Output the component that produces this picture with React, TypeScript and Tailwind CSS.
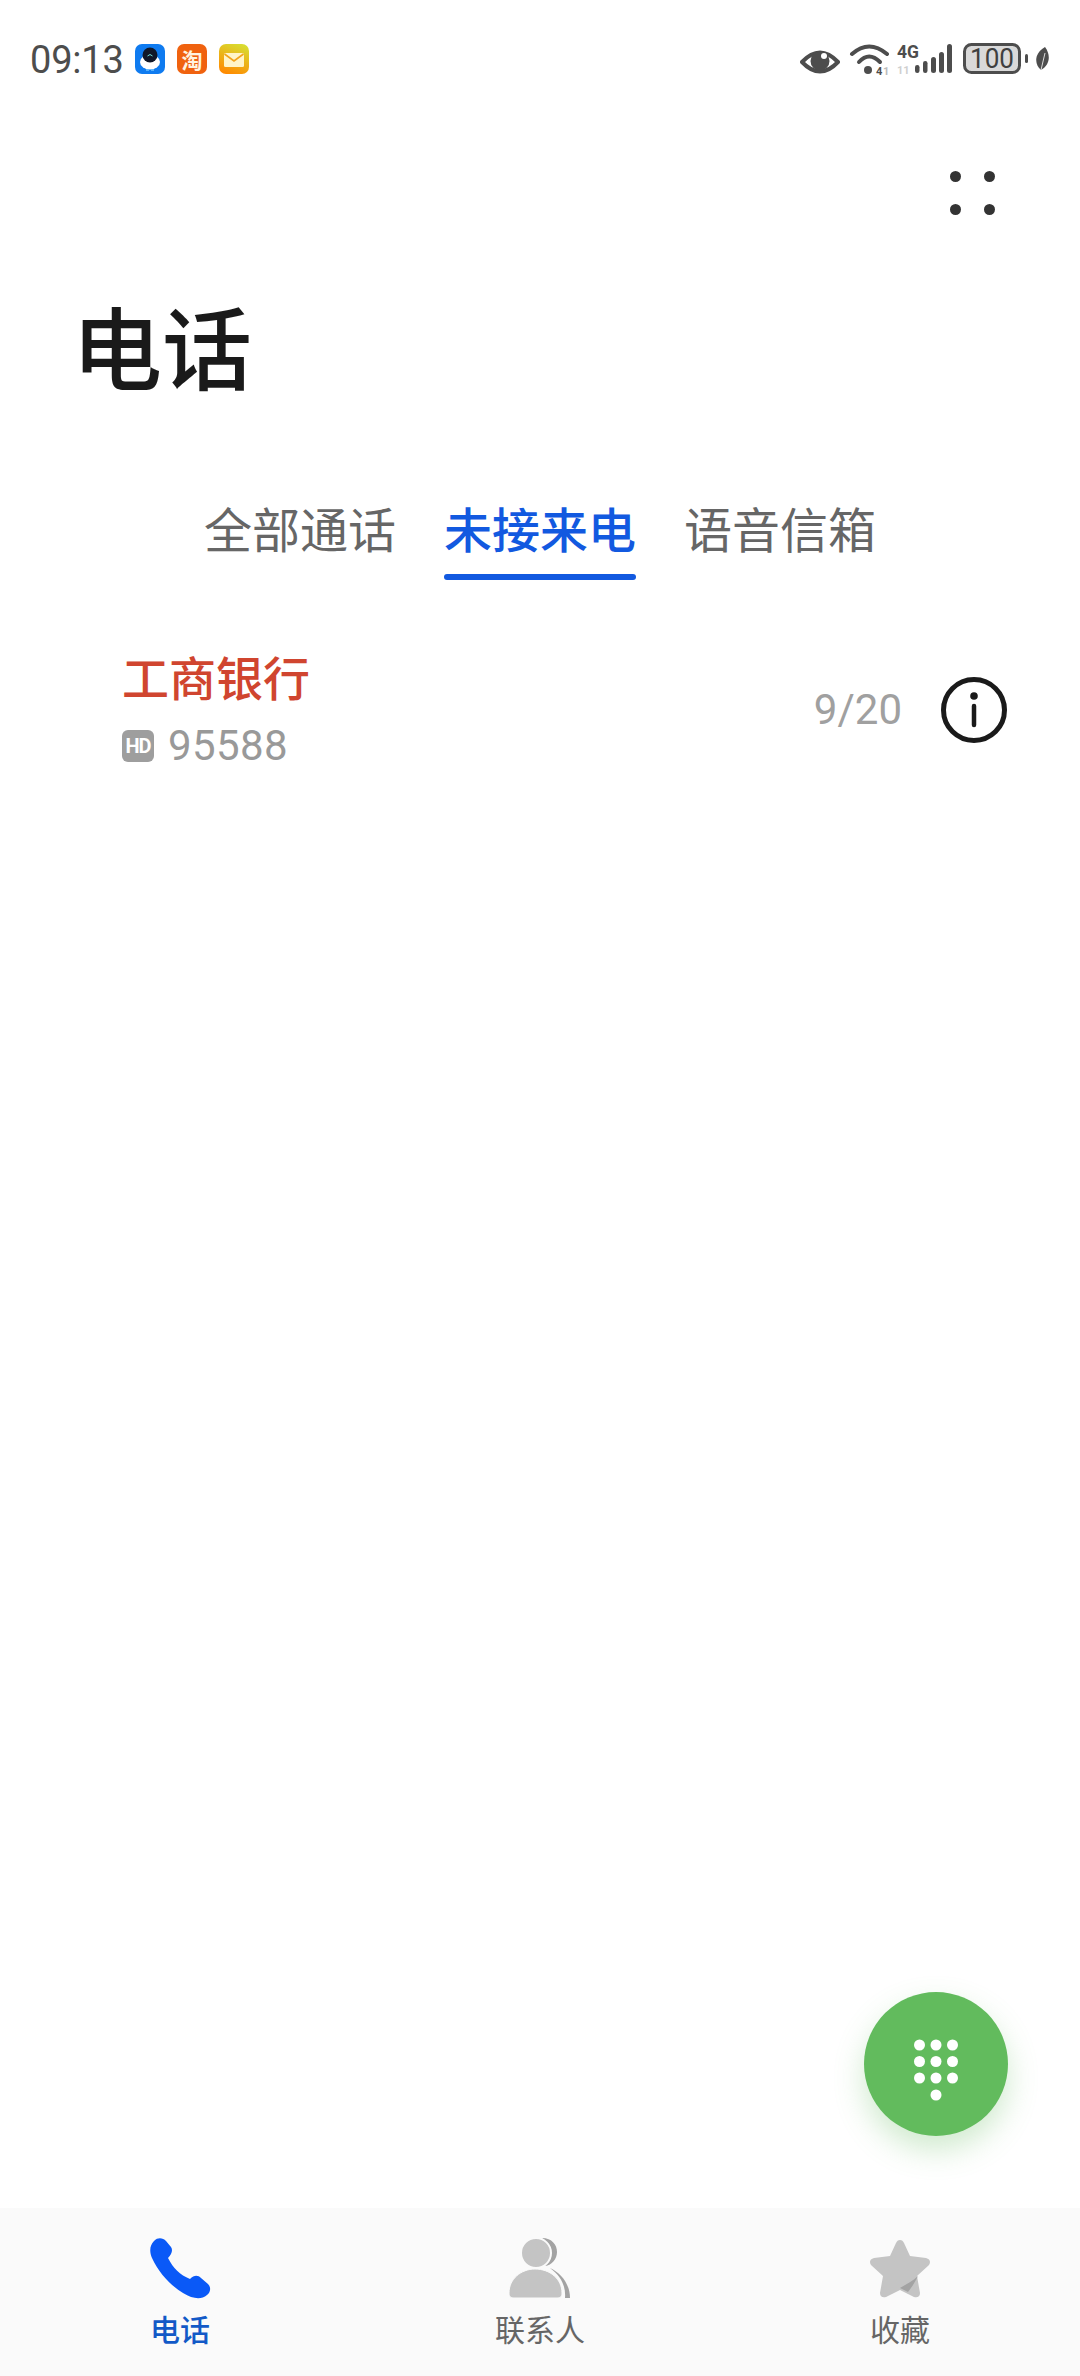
const cjk = { fontFamily: '"Noto Sans CJK SC", sans-serif' };

function StatusBar() {
  return (
    <div className="h-[60px] mt-[30px] pl-[30px] pr-[30px] flex items-center justify-between">
      <div className="flex items-center">
        <span className="w-[93px] text-[38px] leading-none tracking-[-0.2px] text-[#4d4d4d] font-['Roboto',sans-serif]">09:13</span>
        <div className="ml-[12px] mt-[-2px] flex items-center gap-[12px]">
          <svg width="30" height="30" viewBox="0 0 30 30">
            <rect width="30" height="30" rx="7" fill="#0f7bf0" />
            <ellipse cx="15" cy="18" rx="10" ry="7.5" fill="#fff" />
            <circle cx="15" cy="11" r="7.5" fill="#10182a" />
            <path d="M12.5 12 Q15 9 17.5 12" stroke="#6fe0d8" strokeWidth="1" fill="none" />
            <path d="M11 26 H14 M16 26 H19" stroke="#6fc4ff" strokeWidth="1.5" />
          </svg>
          <div className="size-[30px] rounded-[7px] bg-[#f0620f] flex items-center justify-center text-[21px] leading-none text-[#fff3e0] font-bold" style={cjk}>淘</div>
          <svg width="30" height="30" viewBox="0 0 30 30">
            <defs>
              <linearGradient id="mail" x1="0.7" y1="0" x2="0.3" y2="1">
                <stop offset="0" stopColor="#d8dc30" />
                <stop offset="1" stopColor="#ff8a00" />
              </linearGradient>
            </defs>
            <rect width="30" height="30" rx="7" fill="url(#mail)" />
            <rect x="5" y="9" width="20" height="14" rx="1.5" fill="#fff4c8" />
            <path d="M5.5 10 L15 17 L24.5 10" stroke="#f2a31a" strokeWidth="1.6" fill="none" />
          </svg>
        </div>
      </div>
      <svg width="250" height="40" viewBox="0 0 250 40">
        <path d="M2 22 Q20 3 38 22 Q20 41 2 22Z" fill="none" stroke="#4d4d4d" strokeWidth="4" strokeLinejoin="round" />
        <circle cx="20" cy="21" r="9.5" fill="#4d4d4d" />
        <circle cx="24" cy="16" r="3" fill="#fff" />
        <path d="M52 14 Q69 -1 87 14" fill="none" stroke="#4d4d4d" strokeWidth="4" strokeLinecap="round" />
        <path d="M59 22 Q69 11 80 22" fill="none" stroke="#4d4d4d" strokeWidth="4" strokeLinecap="round" />
        <circle cx="68" cy="30" r="4" fill="#4d4d4d" />
        <text x="76" y="35" fontSize="11" fontWeight="700" fill="#4d4d4d" fontFamily="Roboto">4</text>
        <text x="83" y="35" fontSize="11" fontWeight="700" fill="#bbb" fontFamily="Roboto">1</text>
        <text x="97" y="18" fontSize="18" fontWeight="700" fill="#4d4d4d" fontFamily="Roboto" textLength="22" lengthAdjust="spacingAndGlyphs">4G</text>
        <text x="97" y="34" fontSize="11" fontWeight="700" fill="#cfcfcf" fontFamily="Roboto">11</text>
        <rect x="115" y="25" width="4.5" height="8" rx="2.2" fill="#4d4d4d" />
        <rect x="123" y="21" width="4.5" height="12" rx="2.2" fill="#4d4d4d" />
        <rect x="131" y="17" width="5" height="16" rx="2.5" fill="#4d4d4d" />
        <rect x="139" y="12" width="5" height="21" rx="2.5" fill="#4d4d4d" />
        <rect x="147" y="4" width="5" height="29" rx="2.5" fill="#4d4d4d" />
        <rect x="164.5" y="4.5" width="55" height="28" rx="7" fill="#d9d9d9" stroke="#4d4d4d" strokeWidth="3" />
        <text x="192" y="28" textAnchor="middle" fontSize="28" fill="#3f3f3f" fontFamily="Roboto" textLength="44" lengthAdjust="spacingAndGlyphs">100</text>
        <rect x="225" y="14" width="3" height="9" rx="1.5" fill="#4d4d4d" />
        <path d="M245 7 C251 15 250 25 241 30 C235 25 233 14 245 7Z" fill="#4d4d4d" />
        <path d="M245 13 L241 30" stroke="#fff" strokeWidth="0.8" />
      </svg>
    </div>
  );
}

function Tab({ label, active }: { label: string; active?: boolean }) {
  return (
    <div className={active ? "flex flex-col items-center text-[#1259e0]" : "flex flex-col items-center text-[#666666]"}>
      <span className={active ? "text-[48px] leading-[64px] font-medium" : "text-[48px] leading-[64px]"} style={cjk}>{label}</span>
      <div className={active ? "mt-[15px] h-[6px] w-full rounded-full bg-[#1259e0]" : "mt-[15px] h-[6px] w-full"} />
    </div>
  );
}

function NavItem({ label, active, children }: { label: string; active?: boolean; children: React.ReactNode }) {
  return (
    <div className="w-[360px] flex flex-col items-center">
      {children}
      <span className={active ? "mt-[8px] text-[30px] leading-[40px] font-medium text-[#1259c7]" : "mt-[8px] text-[30px] leading-[40px] text-[#666666]"} style={cjk}>{label}</span>
    </div>
  );
}

export default function App() {
  return (
    <div className="relative w-[1080px] h-[2376px] bg-white overflow-hidden flex flex-col">
      <StatusBar />

      <div className="mt-[81px] pr-[85px] flex justify-end">
        <div className="grid grid-cols-2 gap-x-[23px] gap-y-[22px]">
          <div className="size-[11px] rounded-full bg-[#333333]" />
          <div className="size-[11px] rounded-full bg-[#333333]" />
          <div className="size-[11px] rounded-full bg-[#333333]" />
          <div className="size-[11px] rounded-full bg-[#333333]" />
        </div>
      </div>

      <h1 className="mt-[74px] ml-[72px] text-[90px] leading-[110px] font-medium text-[#1a1a1a]" style={cjk}>电话</h1>

      <div className="mt-[96px] flex justify-center gap-[48px]">
        <Tab label="全部通话" />
        <Tab label="未接来电" active />
        <Tab label="语音信箱" />
      </div>

      <div className="mt-[64px] ml-[122px] mr-[73px] flex items-center justify-between">
        <div>
          <div className="text-[47px] leading-[64px] font-medium text-[#d0452f]" style={cjk}>工商银行</div>
          <div className="mt-[10px] flex items-center">
            <div className="w-[32px] h-[32px] rounded-[6px] bg-[#9e9e9e] flex items-center justify-center text-[20px] leading-none font-bold tracking-[-1px] text-white font-['Roboto',sans-serif]">HD</div>
            <span className="ml-[14px] text-[42px] leading-[56px] tracking-[0.4px] text-[#999999] font-['Roboto',sans-serif]">95588</span>
          </div>
        </div>
        <div className="flex items-center mt-[2px]">
          <span className="text-[42px] leading-none text-[#a0a0a0] font-['Roboto',sans-serif]">9/20</span>
          <svg width="66" height="66" viewBox="0 0 66 66" className="ml-[39px]">
            <circle cx="33" cy="33" r="30.5" fill="none" stroke="#1a1a1a" strokeWidth="5" />
            <circle cx="33" cy="19" r="3.8" fill="#1a1a1a" />
            <path d="M33 29 V48" stroke="#1a1a1a" strokeWidth="4.5" strokeLinecap="round" />
          </svg>
        </div>
      </div>

      <div className="absolute left-[864px] top-[1992px] size-[144px] rounded-full bg-[#62bb5d] shadow-[0_14px_30px_rgba(98,187,93,0.3)] flex items-center justify-center">
        <svg width="48" height="62" viewBox="0 0 48 62" fill="#fff" className="mt-[12px]">
          <circle cx="7.5" cy="6" r="5.5" /><circle cx="24" cy="6" r="5.5" /><circle cx="40.5" cy="6" r="5.5" />
          <circle cx="7.5" cy="22.5" r="5.5" /><circle cx="24" cy="22.5" r="5.5" /><circle cx="40.5" cy="22.5" r="5.5" />
          <circle cx="7.5" cy="39" r="5.5" /><circle cx="24" cy="39" r="5.5" /><circle cx="40.5" cy="39" r="5.5" />
          <circle cx="24" cy="56" r="5.5" />
        </svg>
      </div>

      <div className="mt-auto h-[168px] bg-[#fafafa] flex pt-[30px]">
        <NavItem label="电话" active>
          <svg width="62" height="62" viewBox="0 0 62 62">
            <path d="M5 3 C9 -1 14 0 17 3 L22 9 C24 12 23 16 19 20 C24 30 31 37 41 41 C45 37 49 37 52 40 L59 46 C62 49 62 54 58 57 C52 62 44 61 34 55 C21 47 10 35 3 20 C0 13 1 7 5 3Z" fill="#0a59f7" />
          </svg>
        </NavItem>
        <NavItem label="联系人">
          <svg width="62" height="62" viewBox="0 0 62 62">
            <path d="M33 0 C43 0 48 7 48 14 C48 21 43 27 36 28 C42 21 42 7 33 0Z" fill="#a3a3a3" />
            <path d="M41 30 C52 35 61 46 61 60 L56 60 C57 48 52 38 41 30Z" fill="#a3a3a3" />
            <circle cx="27" cy="15" r="15" fill="#c4c4c4" stroke="#fafafa" strokeWidth="2" />
            <path d="M0 55 C0 41 12 31 26 31 C41 31 53 41 53 55 C53 59 51 60 48 60 L5 60 C2 60 0 59 0 55Z" fill="#c4c4c4" stroke="#fafafa" strokeWidth="1" />
          </svg>
        </NavItem>
        <NavItem label="收藏">
          <svg width="62" height="62" viewBox="0 0 62 62">
            <path d="M31 2 C33 2 34 3 35 5 L41 18 L57 20 C61 21 62 24 60 27 L48 38 L51 55 C51 59 48 60 45 59 L31 52 L17 59 C14 60 11 59 11 55 L14 38 L2 27 C0 24 1 21 5 20 L21 18 L27 5 C28 3 29 2 31 2Z" fill="#c4c4c4" />
            <path d="M31 50 C37 46 44 43 49 38 C46 44 43 49 39 54 Z" fill="#a3a3a3" />
          </svg>
        </NavItem>
      </div>
    </div>
  );
}
